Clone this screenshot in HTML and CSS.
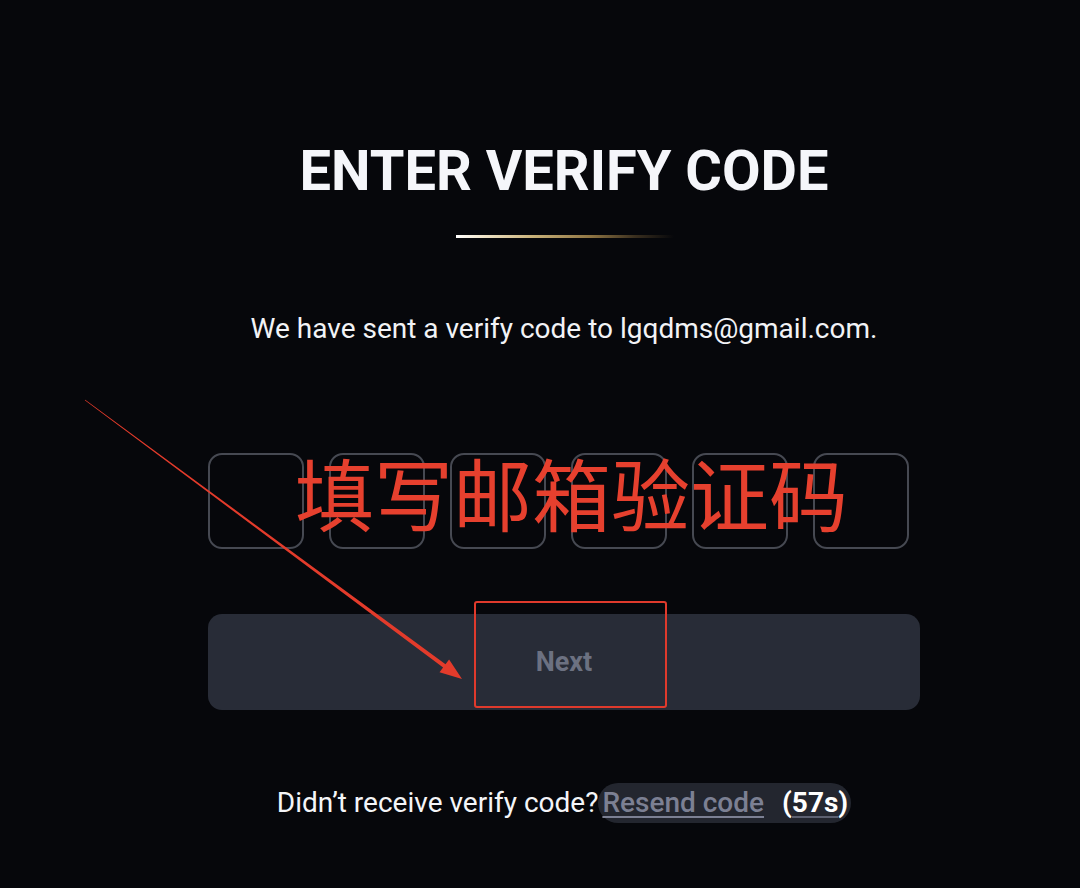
FILE: index.html
```html
<!DOCTYPE html>
<html lang="en">
<head>
<meta charset="utf-8">
<title>Enter verify code</title>
<link rel="stylesheet" href="styles.css">
</head>
<body>
<main class="page">
  <section class="card">
    <h1 class="title">ENTER VERIFY CODE</h1>
    <div class="rule"></div>
    <p class="sent">We have sent a verify code to lgqdms@gmail.com.</p>
    <div class="codes">
      <div class="code"></div>
      <div class="code"></div>
      <div class="code"></div>
      <div class="code"></div>
      <div class="code"></div>
      <div class="code"></div>
    </div>
    <button class="next" type="button">Next</button>
    <div class="resend-row">
      <span class="question">Didn’t receive verify code?</span><span class="pill"><span class="resend">Resend code</span><span class="timer">(<span class="secs">57s</span>)</span></span>
    </div>
  </section>

  <div class="note-text">填写邮箱验证码</div>
  <div class="note-box"></div>
  <svg class="note-arrow" width="1080" height="888" viewBox="0 0 1080 888">
    <polygon fill="#e33b2b" points="85.2,399.7 445.5,664.3 449.1,659.5 462,679 439.5,672.3 443.1,667.5 84.8,400.3"/>
  </svg>
</main>
</body>
</html>
```

FILE: styles.css
```css
* { box-sizing: border-box; }

html, body {
  margin: 0;
  padding: 0;
  background: #06070b;
}

body {
  font-family: Roboto, "Liberation Sans", Arial, sans-serif;
  color: #f4f5f9;
}

.page {
  position: relative;
  width: 1080px;
  height: 888px;
  overflow: hidden;
  background: #06070b;
}

.card {
  margin-left: 208px;
  width: 712px;
  padding-top: 138px;
  display: flex;
  flex-direction: column;
  align-items: center;
}

.title {
  margin: 0;
  font-size: 56px;
  line-height: 66px;
  font-weight: 700;
  color: #f5f6fa;
  letter-spacing: 0;
}

.rule {
  margin-top: 31px;
  width: 218px;
  height: 3px;
  margin-left: 2px;
  background: linear-gradient(90deg, #ffffff 0%, #f1e6cc 12%, #c9b27a 35%, #8e7443 62%, #3a2f1f 82%, rgba(20,18,16,0) 100%);
}

.sent {
  margin: 75px 0 0;
  font-size: 28px;
  line-height: 32px;
  font-weight: 400;
  color: #f2f3f6;
}

.codes {
  margin-top: 108px;
  align-self: flex-start;
  display: flex;
  gap: 25px;
}

.code {
  width: 96px;
  height: 96px;
  border: 2px solid #464952;
  border-radius: 14px;
}

.next {
  margin-top: 65px;
  width: 712px;
  height: 96px;
  border: none;
  border-radius: 14px;
  background: #282c37;
  color: #6c7181;
  font-family: Roboto, "Liberation Sans", Arial, sans-serif;
  font-size: 27px;
  font-weight: 700;
  padding: 0;
}

.resend-row {
  margin-top: 73px;
  height: 40px;
  line-height: 40px;
  font-size: 28px;
  display: flex;
  align-items: center;
  white-space: nowrap;
}

.question {
  color: #f4f5f8;
}

.pill {
  display: inline-flex;
  align-items: center;
  height: 40px;
  padding: 0 3px 0 4px;
  border-radius: 20px;
  background: #23262f;
}

.resend {
  color: #7c8093;
  font-weight: 500;
  text-decoration: underline;
  text-decoration-thickness: 2px;
  text-underline-offset: 4px;
}

.timer {
  margin-left: 18px;
  color: #ffffff;
  font-weight: 700;
}

.secs {
  text-decoration: underline;
  text-decoration-color: #5c6070;
  text-underline-offset: 4px;
}

/* annotation overlay */
.note-text {
  position: absolute;
  left: 295px;
  top: 452px;
  font-family: "Noto Sans CJK SC", "Noto Sans", sans-serif;
  font-size: 79px;
  line-height: 1;
  font-weight: 400;
  color: #e6402e;
  white-space: nowrap;
}

.note-box {
  position: absolute;
  left: 474px;
  top: 601px;
  width: 193px;
  height: 107px;
  border: 2.5px solid #e03a2c;
  border-radius: 3px;
}

.note-arrow {
  position: absolute;
  left: 0;
  top: 0;
  pointer-events: none;
}
```
